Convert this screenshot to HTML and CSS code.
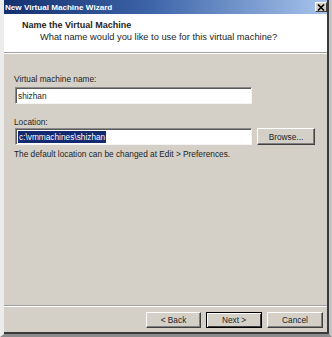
FILE: index.html
```html
<!DOCTYPE html>
<html>
<head>
<meta charset="utf-8">
<link rel="stylesheet" href="styles.css">
</head>
<body>
<div class="frame">
<div class="window">
  <div class="titlebar">
    <span class="title">New Virtual Machine Wizard</span>
    <span class="close"><svg width="8" height="7" viewBox="0 0 8 7"><path d="M1 0.5 L7 6.5 M7 0.5 L1 6.5" stroke="#000" stroke-width="1.6"/></svg></span>
  </div>
  <div class="header">
    <div class="h-title">Name the Virtual Machine</div>
    <div class="h-sub">What name would you like to use for this virtual machine?</div>
  </div>
  <div class="body">
    <div class="label">Virtual machine name:</div>
    <div class="row first"><div class="input">shizhan</div></div>
    <div class="label loc">Location:</div>
    <div class="row">
      <div class="input"><span class="sel">c:\vmmachines\shizhan</span></div>
      <div class="btn browse">Browse...</div>
    </div>
    <div class="hint">The default location can be changed at Edit &gt; Preferences.</div>
  </div>
  <div class="footer">
    <div class="btn back">&lt; Back</div>
    <div class="btn default">Next &gt;</div>
    <div class="btn">Cancel</div>
  </div>
</div>
</div>
</body>
</html>
```
FILE: styles.css
```css
html, body { margin: 0; padding: 0; }
body { width: 332px; height: 337px; background: #a8a8a8; font-family: "Liberation Sans", Arial, sans-serif; font-size: 8.3px; color: #1e1e1e; }
.frame {
  width: 332px; height: 337px; box-sizing: border-box;
  border-left: 4px solid #ececec;
  border-right: 3px solid #c4c4c4;
  border-bottom: 3px solid #8c8c8c;
  background: #c4c4c4;
}
.window {
  height: 100%; box-sizing: border-box;
  display: flex; flex-direction: column;
  background: #d4d0c8;
  border-right: 2px solid #3a3a3a;
  border-bottom: 2px solid #3a3a3a;
}
.titlebar {
  height: 14px; flex: none;
  background: linear-gradient(to right, #14306e 0%, #3c64a8 45%, #a8c4ec 100%);
  display: flex; align-items: center; justify-content: space-between;
  padding: 0 0 0 1px;
}
.title { color: #fff; font-weight: bold; font-size: 8.1px; }
.close {
  width: 12px; height: 10px; box-sizing: border-box;
  background: #d4d0c8; border: 1px solid; border-color: #fff #404040 #404040 #fff;
  display: flex; align-items: center; justify-content: center;
}
.header {
  height: 39px; flex: none; background: #fff;
  border-bottom: 1px solid #a0a0a0;
  padding: 5px 0 0 18px; box-sizing: border-box;
}
.h-title { font-weight: bold; font-size: 9px; line-height: 12px; }
.h-sub { padding-left: 18px; line-height: 12px; font-size: 9.3px; }
.body { flex: 1; padding: 19px 0 0 10px; display: flex; flex-direction: column; border-top: 1px solid #fff; }
.label { line-height: 12px; }
.label.loc { margin-top: 12px; }
.row { display: flex; align-items: center; gap: 5px; }
.row.first { margin-top: 2px; }
.input {
  width: 237px; height: 17px; box-sizing: border-box; margin-left: 1px;
  background: #fff; border: 1px solid; border-color: #8a8a8a #f4f4f4 #f4f4f4 #8a8a8a;
  box-shadow: inset 1px 1px 0 #5a5a5a;
  padding: 2px 0 0 2px; line-height: 12px;
  display: flex; align-items: flex-start;
}
.sel { background: #142a70; color: #fff; display: inline-block; height: 12px; line-height: 12px; padding: 0 1px; }
.btn {
  width: 56px; height: 17px; box-sizing: border-box;
  background: #d4d0c8; border: 1px solid; border-color: #fff #404040 #404040 #fff;
  box-shadow: inset -1px -1px 0 #808080;
  display: flex; align-items: center; justify-content: center;
}
.browse { width: 58px; }
.hint { margin-top: 3px; line-height: 12px; }
.footer {
  height: 27px; flex: none; box-sizing: border-box;
  border-top: 1px solid #a0a0a0; box-shadow: inset 0 1px 0 #fff;
  display: flex; justify-content: flex-end; align-items: flex-start;
  padding: 6px 4px 0 0; gap: 5px;
}
.footer .btn { height: 16px; }
.footer .back { width: 55px; }
.btn.default { border-color: #000; box-shadow: inset 1px 1px 0 #fff, inset -1px -1px 0 #404040; }
```
